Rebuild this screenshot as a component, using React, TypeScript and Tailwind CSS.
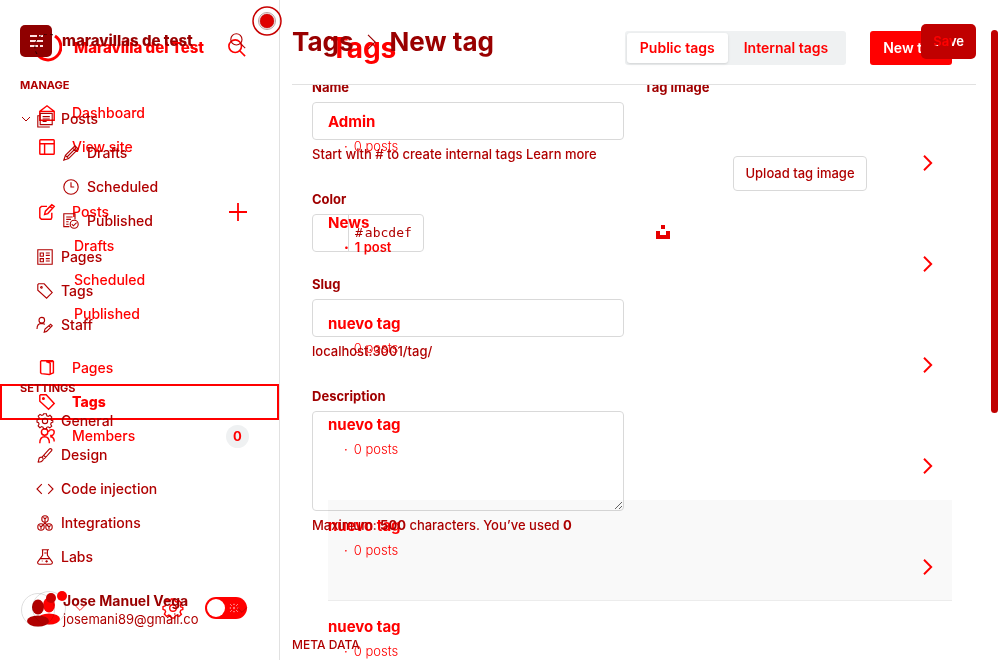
import React from "react";

type Glyph =
  | "stack" | "house" | "pencil" | "clock" | "published" | "list" | "tag" | "staff" | "gear"
  | "brush" | "code" | "rings" | "flask" | "layout" | "compose" | "pages" | "members"
  | "plus" | "right" | "down" | "search" | "sun";

const shapes: Record<Glyph, React.ReactNode> = {
  stack: <path d="M3 6H1v14h15M4 3h15v14H4zM7 7h9M7 10h9M7 13h5" />,
  house: <path d="M1 8l9-7 9 7v11H1zM1 8h18" />,
  pencil: <path d="M1 19l2-6L15 1l4 4L7 17zM3 13l4 4M12 4l4 4M5 15L16 4" />,
  clock: <><circle cx="10" cy="10" r="9" /><path d="M10 4v6h4" /></>,
  published: <><path d="M8 17H1V1h14v7M4 5h8M4 8h6M4 11h3M4 14h3" /><circle cx="14" cy="14" r="5" /><path d="M11 14l2 2 4-4" /></>,
  list: <path d="M1 1h18v18H1zM4 5h4v4H4zM4 12h4v4H4zM11 5h5M11 8h5M11 12h5M11 15h5" />,
  tag: <><path d="M1 2l1-1h7l10 11-7 7L1 9z" /><circle cx="5.500" cy="5.500" r="1" /></>,
  staff: <><circle cx="6" cy="4" r="3.500" /><path d="M0 15c0-5 2-7 6-7l4 1M9 19l1-4 7-6 2 2-7 7zM15 11l2 2" /></>,
  gear: <><circle cx="10" cy="10" r="3.300" /><path d="M8.300 1h3.400l.6 2.500 1.700.7 2.200-1.400 2.300 2.400-1.300 2.200.6 1.600 2 .5v2l-2 .7-.7 1.900 1.300 2.300-2.400 2.100-2.200-1.200-1.500.6-.7 2.100H8.300l-.8-2.300-1.700-.7-2.200 1.400-2.200-2.300 1.200-2.300-.7-1.800L0 11.300V8.700L2.100 8l.7-1.700L1.500 4l2.300-2.300L6 3l1.700-.7z" /></>,
  brush: <path d="M1 19c2-1 0-5 3-6 3-1 5 2 3 4-1 2-4 2-6 2zM6 13l9-10c2-2 5 0 3 2L9 15M8 10l3 3" />,
  code: <path d="M6 4L0 10l6 6M14 4l6 6-6 6" />,
  rings: <><circle cx="10" cy="5" r="4" /><circle cx="5" cy="15" r="4" /><circle cx="15" cy="15" r="4" /><path d="M10 5v5l-5 5M10 10l5 5M8 3l2 2 2-2M3 13l2 2v3M17 13l-2 2v3" /></>,
  flask: <path d="M6 1h9M7 1v7L1 16c-1 2 1 3 2 3h14c1 0 3-1 2-3l-6-8V1M4 12h12M9 5h3M6 15h1M12 14v3M10.500 15.500h3" />,
  layout: <><rect x="1" y="1" width="18" height="18" rx="1" /><path d="M1 6h18M7 6v13" /></>,
  compose: <path d="M10 3H3L1 5v12l2 2h12l1-2v-6M7 13l1-4 8-8 3 2-8 9zM14 3l3 3" />,
  pages: <path d="M2 2l1-1h14l1 1v14l-5 2-10-1-1-1zM9 2l5 2v14M9 2h8" />,
  members: <><circle cx="7" cy="5" r="4" /><path d="M1 19c0-6 2-8 6-8s6 2 6 8M12 5c0-4 7-4 7 0s-3 5-5 4M14 11c3 0 5 2 5 6" /></>,
  plus: <path d="M10 0v20M0 10h20" />,
  right: <path d="M5 1l9 9-9 9" />,
  down: <path d="M2 6l8 8 8-8" />,
  search: <><circle cx="8" cy="8" r="7" /><path d="M13 13l6 6" /></>,
  sun: <path d="M4 4l2 2M16 4l-2 2M4 16l2-2M16 16l-2-2M10 3v2M10 15v2M3 10h2M15 10h2M9 9h2M9 11h2" />,
};

function Icon({ name, className = "size-4", weight = 1.4 }: { name: Glyph; className?: string; weight?: number }) {
  return (
    <svg viewBox="0 0 20 20" className={`shrink-0 overflow-visible ${className}`} fill="none" stroke="currentColor" strokeWidth={weight} aria-hidden="true">
      {shapes[name]}
    </svg>
  );
}

function Row({ icon, label, sub = false }: { icon: Glyph; label: string; sub?: boolean }) {
  return (
    <a href="#" className={`flex h-[34px] items-center gap-2 text-sm font-medium ${sub ? "pl-[63px]" : "pl-[37px]"}`}>
      <Icon name={icon} />
      {label}
    </a>
  );
}

function ListRow({ icon, label, children }: { icon?: Glyph; label: string; children?: React.ReactNode }) {
  return (
    <div className={`flex h-[34px] items-center pr-[30px] text-sm font-medium ${icon ? "pl-[39px]" : "pl-[74px]"}`}>
      <a href="#" className="flex flex-1 items-center gap-[17px]">
        {icon && <Icon name={icon} weight={1.8} />}
        {label}
      </a>
      {children}
    </div>
  );
}

function Avatar() {
  return (
    <svg viewBox="0 0 34 34" className="size-[34px] shrink-0" fill="currentColor" aria-hidden="true">
      <circle cx="17" cy="17" r="16.500" fill="none" stroke="#dedede" />
      <ellipse cx="17" cy="14" rx="6" ry="7.500" />
      <ellipse cx="17" cy="28" rx="11" ry="5.500" />
    </svg>
  );
}

const tags = [
  { name: "Admin", posts: "0 posts" },
  { name: "News", posts: "1 post" },
  { name: "nuevo tag", posts: "0 posts" },
  { name: "nuevo tag", posts: "0 posts" },
  { name: "nuevo tag", posts: "0 posts", active: true },
  { name: "nuevo tag", posts: "0 posts" },
];

function TagList() {
  return (
    <div className="col-start-1 row-start-1 flex h-screen min-w-0 overflow-hidden text-[#ff0000]">
      <aside className="flex w-[280px] shrink-0 flex-col border-r border-[#e1e1e1] pt-[34px]">
        <header className="flex h-7 items-center pr-[33px] pl-[34px]">
          <svg viewBox="0 0 28 28" className="size-7" fill="none" stroke="currentColor" aria-hidden="true">
            <path d="M21 2A13 13 0 1 1 3 20" strokeWidth="3" />
            <path d="M3 20A13 13 0 0 1 21 2" stroke="#430000" strokeDasharray="3 3" />
          </svg>
          <strong className="flex-1 pl-3 text-[15px] font-extrabold">Maravilla del Test</strong>
          <button aria-label="Search site"><Icon name="search" className="size-[18px]" weight={1.8} /></button>
        </header>
        <nav className="mt-[34px]">
          <ListRow icon="house" label="Dashboard" />
          <ListRow icon="layout" label="View site" />
          <div className="mt-[31px]">
            <ListRow icon="compose" label="Posts">
              <button aria-label="New post" className="mr-0.5"><Icon name="plus" className="size-[18px]" weight={2} /></button>
            </ListRow>
            <ListRow label="Drafts" />
            <ListRow label="Scheduled" />
            <ListRow label="Published" />
          </div>
          <div className="mt-5">
            <ListRow icon="pages" label="Pages" />
            <div className="-my-px border-2 border-[#ff0000] font-extrabold">
              <a href="#" className="flex h-8 items-center gap-[17px] pl-[37px] text-sm">
                <Icon name="tag" weight={1.8} />Tags
              </a>
            </div>
            <ListRow icon="members" label="Members">
              <span className="flex size-[23px] items-center justify-center rounded-full bg-[#eff1f2] text-[13px] font-bold">0</span>
            </ListRow>
          </div>
        </nav>
        <footer className="mt-auto flex items-center pr-8 pb-[35px] pl-8">
          <button aria-label="Account" className="relative flex items-center gap-2">
            <Avatar />
            <span className="absolute top-0 left-[25px] size-2.5 rounded-full bg-[#ff0000]" />
            <Icon name="down" className="size-3" />
          </button>
          <a href="#" aria-label="Settings" className="ml-[77px]"><Icon name="gear" className="size-5" weight={1.4} /></a>
          <button role="switch" aria-checked="false" aria-label="Night mode" className="ml-[22px] flex h-[22px] w-[42px] shrink-0 items-center rounded-full bg-[#ff0000] px-0.5">
            <span className="size-[18px] rounded-full bg-white" />
            <Icon name="sun" className="ml-[3px] size-3 text-white" />
          </button>
        </footer>
      </aside>
      <main className="min-w-0 flex-1 px-12 pt-[31px]">
        <header className="flex h-[34px] items-center">
          <h1 className="flex-1 pl-0.5 text-[28px] font-bold">Tags</h1>
          <div className="flex h-[34px] items-center rounded-[3px] bg-[#eff1f2] p-0.5 text-sm font-semibold whitespace-nowrap">
            <button className="h-[30px] rounded-[3px] bg-white px-[13px] shadow-sm">Public tags</button>
            <button className="h-[30px] px-4">Internal tags</button>
          </div>
          <button className="ml-6 h-[34px] rounded-[3px] bg-[#ff0000] px-[13px] text-sm font-semibold whitespace-nowrap text-white">New tag</button>
        </header>
        <ul className="mt-[31px]">
          {tags.map((tag, index) => (
            <li key={index} className={`h-[101px] ${tag.active ? "border-b border-[#ececec] bg-[#f9f9f9]" : ""}`}>
              <a href="#" className="flex h-full pt-4 pr-4">
                <span className="flex-1">
                  <b className="block text-[15px] leading-5">{tag.name}</b>
                  <span className={`mt-1 flex gap-1.5 pl-4 text-[13px] leading-5 ${index === 1 ? "font-semibold" : "font-light"}`}><b>·</b>{tag.posts}</span>
                </span>
                <Icon name="right" className="mt-[43px] size-4" weight={2.4} />
              </a>
            </li>
          ))}
        </ul>
      </main>
    </div>
  );
}

const inputStyle = "block w-full rounded border border-[#d9d9d9] bg-transparent outline-none";
const labelStyle = "mb-[5px] block h-5 text-[13px] leading-5 font-bold text-[#a00000]";
const hintStyle = "mt-1 h-5 text-[13px] leading-5 font-medium whitespace-nowrap";

function TagForm() {
  return (
    <div className="col-start-1 row-start-1 flex h-screen min-w-0 overflow-hidden text-[#b00000] mix-blend-multiply">
      <aside className="flex w-[280px] shrink-0 flex-col pt-[25px]">
        <header className="flex h-8 items-center pr-[34px] pl-5">
          <svg viewBox="0 0 32 32" className="size-8 shrink-0" aria-hidden="true">
            <rect width="32" height="32" rx="5" fill="#8f0000" />
            <path d="M10 11h7m2 0h4M10 16h13M10 21h8m2 0h3" stroke="#ffe1e1" strokeWidth="2" />
          </svg>
          <strong className="flex-1 pl-2.5 text-[15px] font-extrabold text-[#990000]">maravillas de test</strong>
          <button aria-label="Search"><Icon name="search" className="size-4" /></button>
        </header>
        <h2 className="mt-[18px] h-5 pl-5 text-[11px] leading-5 font-bold">MANAGE</h2>
        <nav className="mt-[7px]">
          <div className="relative">
            <Row icon="stack" label="Posts" />
            <button aria-label="Collapse posts" className="absolute top-3 left-[21px]"><Icon name="down" className="size-2.5" weight={2} /></button>
          </div>
          <Row icon="pencil" label="Drafts" sub />
          <Row icon="clock" label="Scheduled" sub />
          <Row icon="published" label="Published" sub />
          <div className="mt-0.5">
            <Row icon="list" label="Pages" />
            <Row icon="tag" label="Tags" />
            <Row icon="staff" label="Staff" />
          </div>
        </nav>
        <h2 className="mt-9 h-5 pl-5 text-[11px] leading-5 font-bold">SETTINGS</h2>
        <nav className="mt-1.5">
          <Row icon="gear" label="General" />
          <Row icon="brush" label="Design" />
          <Row icon="code" label="Code injection" />
          <Row icon="rings" label="Integrations" />
          <Row icon="flask" label="Labs" />
        </nav>
        <footer className="mt-auto flex items-center pr-8 pb-8 pl-[21px]">
          <div className="relative">
            <Avatar />
            <span className="absolute top-0 left-[25px] size-2.5 rounded-full bg-[#c90000]" />
          </div>
          <div className="w-[133px] pl-2 whitespace-nowrap">
            <b className="block text-sm leading-[18px] text-[#990000]">Jose Manuel Vega</b>
            <span className="block text-[13px] leading-[18px]">josemani89@gmail.co</span>
          </div>
          <button aria-label="Account menu" className="ml-auto"><Icon name="down" className="size-3" /></button>
        </footer>
      </aside>
      <main className="flex min-w-0 flex-1 flex-col pr-6 pl-3">
        <header className="flex h-[85px] shrink-0 items-start border-b border-[#e1e1e1] pt-6">
          <h1 className="flex h-[35px] flex-1 items-center text-[26px] font-bold text-[#990000]">
            <a href="#">Tags</a>
            <Icon name="right" className="mx-2.5 size-4" />
            New tag
          </h1>
          <button className="h-[35px] rounded-[5px] bg-[#c00000] px-3 text-[13px] font-semibold text-white">Save</button>
        </header>
        <div className="min-h-0 flex-1 overflow-hidden">
          <form className="-mt-2 grid grid-cols-2 gap-5 px-5">
            <div>
              <label htmlFor="name" className={labelStyle}>Name</label>
              <input id="name" className={`${inputStyle} h-[38px] px-3`} />
              <p className={hintStyle}>Start with # to create internal tags <a href="#">Learn more</a></p>
              <label htmlFor="color" className={`${labelStyle} mt-[25px]`}>Color</label>
              <div className="flex h-[38px] w-28 items-center rounded border border-[#d9d9d9] font-['DejaVu_Sans_Mono',monospace] text-[13px]">
                <span className="h-full w-9 border-r border-[#d9d9d9]" />
                <span className="pl-1.5">#</span>
                <input id="color" placeholder="abcdef" className="w-14 bg-transparent pl-0.5 outline-none placeholder:text-[#b00000]" />
              </div>
              <label htmlFor="slug" className={`${labelStyle} mt-[22px]`}>Slug</label>
              <input id="slug" className={`${inputStyle} h-[38px] px-3`} />
              <p className={hintStyle}>localhost:3001/tag/</p>
              <label htmlFor="description" className={`${labelStyle} mt-[25px]`}>Description</label>
              <textarea id="description" className={`${inputStyle} h-[100px] resize-y p-3`} />
              <p className={hintStyle}>Maximum: <b>500</b> characters. You’ve used <b>0</b></p>
            </div>
            <div>
              <h2 className={labelStyle}>Tag image</h2>
              <div className="relative flex h-[143px] items-center justify-center">
                <button type="button" className="h-[35px] rounded border border-[#d9d9d9] px-[11px] text-[13px] font-medium">Upload tag image</button>
                <button type="button" aria-label="Search Unsplash" className="absolute bottom-1.5 left-3">
                  <svg viewBox="0 0 14 14" className="size-3.5" fill="#e60000" aria-hidden="true"><path d="M5 0h4v4H5zM0 6h4v4h6V6h4v8H0z" /></svg>
                </button>
              </div>
            </div>
          </form>
          <h2 className="mt-[100px] text-xs leading-5 font-medium">META DATA</h2>
        </div>
      </main>
      <div className="absolute top-[30px] right-0.5 h-[383px] w-[7px] rounded-sm bg-[#c00000]" />
      <svg viewBox="0 0 30 30" className="absolute top-1.5 left-[252px] size-[30px]" fill="none" aria-hidden="true">
        <circle cx="15" cy="15" r="14" stroke="#c80000" strokeWidth="1.500" />
        <circle cx="15" cy="15" r="8.500" stroke="#b8a0a0" />
        <circle cx="15" cy="15" r="7" fill="#df0000" stroke="#b00000" strokeWidth="0.500" />
      </svg>
    </div>
  );
}

export default function App() {
  return (
    <div className="relative isolate grid min-h-screen grid-cols-1 bg-white font-['Inter',sans-serif]">
      <TagList />
      <TagForm />
    </div>
  );
}
